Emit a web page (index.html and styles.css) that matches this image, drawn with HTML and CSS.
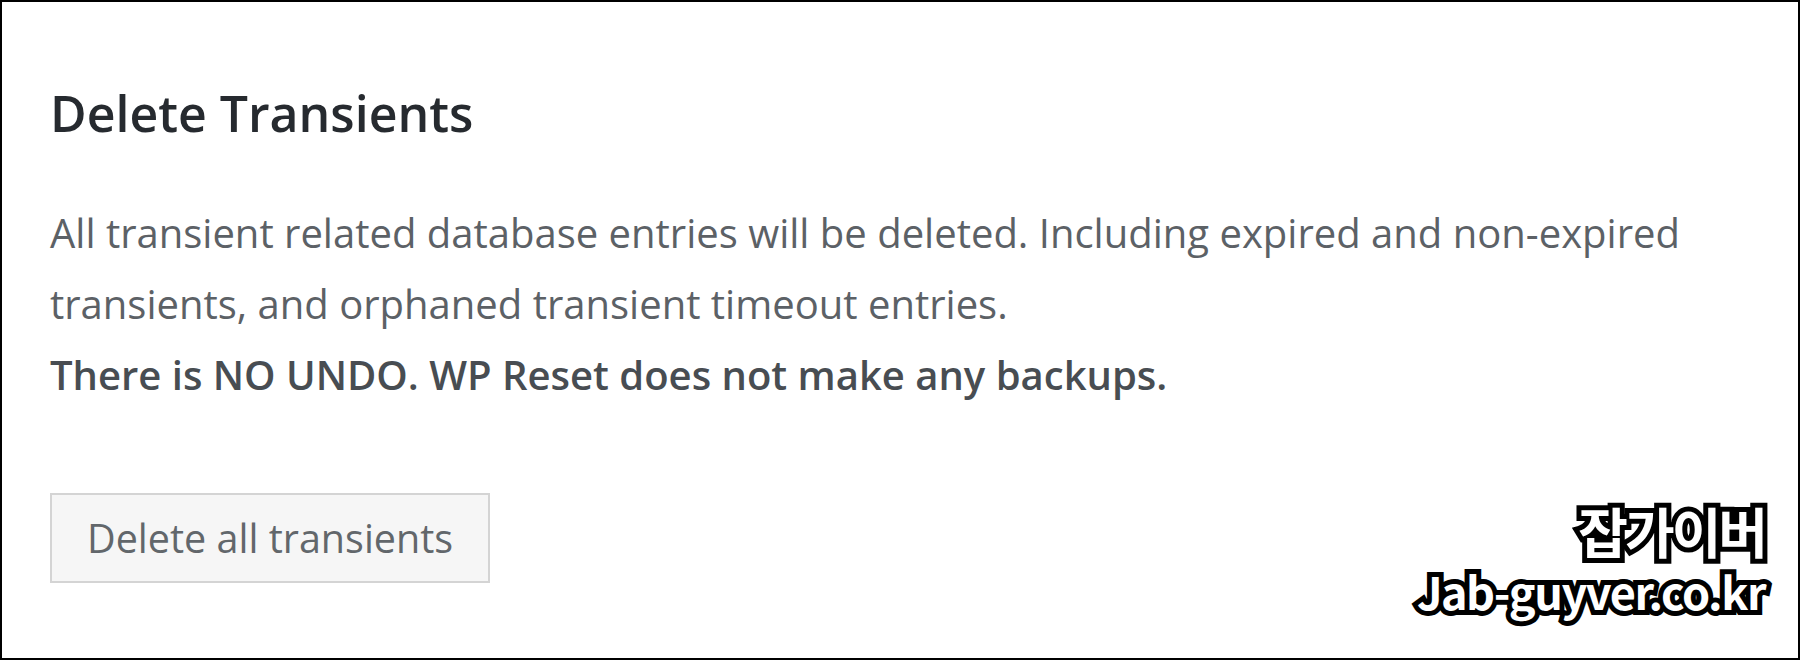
FILE: index.html
```html
<!DOCTYPE html>
<html lang="en">
<head>
<meta charset="utf-8">
<title>Delete Transients</title>
<link rel="stylesheet" href="styles.css">
</head>
<body>
<div class="frame">
  <section class="card">
    <h2 class="card-title">Delete Transients</h2>
    <p class="card-text">All transient related database entries will be deleted. Including expired and non-expired transients, and orphaned transient timeout entries.<br><strong class="warning">There is NO UNDO. WP Reset does not make any backups.</strong></p>
    <button class="btn" type="button">Delete all transients</button>
  </section>
  <div class="watermark">
    <span class="wm-ko">잡가이버</span>
    <span class="wm-en">Jab-guyver.co.kr</span>
  </div>
</div>
</body>
</html>
```

FILE: styles.css
```css
html, body {
  margin: 0;
  padding: 0;
  background: #ffffff;
}

.frame {
  position: relative;
  box-sizing: border-box;
  width: 1800px;
  height: 660px;
  border: 2px solid #000000;
  background: #ffffff;
  overflow: hidden;
}

.card {
  display: flex;
  flex-direction: column;
  align-items: flex-start;
  padding: 80px 0 0 48px;
  font-family: "Open Sans", "Noto Sans", sans-serif;
}

.card-title {
  margin: 0;
  font-size: 50px;
  line-height: 62px;
  font-weight: 600;
  color: #262a2f;
}

.card-text {
  margin: 53px 0 0 0;
  width: 1690px;
  font-size: 40px;
  line-height: 71px;
  color: #5c6166;
}

.warning {
  font-weight: 600;
  color: #484d52;
}

.btn {
  margin-top: 83px;
  box-sizing: border-box;
  height: 90px;
  padding: 0 35px;
  border: 2px solid #d4d4d4;
  background: #f6f6f6;
  font-family: "Open Sans", "Noto Sans", sans-serif;
  font-size: 39.5px;
  line-height: 86px;
  color: #62676b;
  border-radius: 0;
}

.watermark {
  position: absolute;
  right: 33px;
  bottom: 41px;
  display: flex;
  flex-direction: column;
  align-items: flex-end;
  font-family: "Noto Sans CJK KR", "Noto Sans", sans-serif;
  font-weight: 700;
  color: #ffffff;
  -webkit-text-stroke: 10px #000000;
  paint-order: stroke fill;
}

.wm-ko {
  font-size: 54px;
  line-height: 58px;
  letter-spacing: -3px;
  margin-bottom: 5px;
}

.wm-en {
  font-size: 45px;
  line-height: 52px;
  letter-spacing: -1.5px;
}
```
